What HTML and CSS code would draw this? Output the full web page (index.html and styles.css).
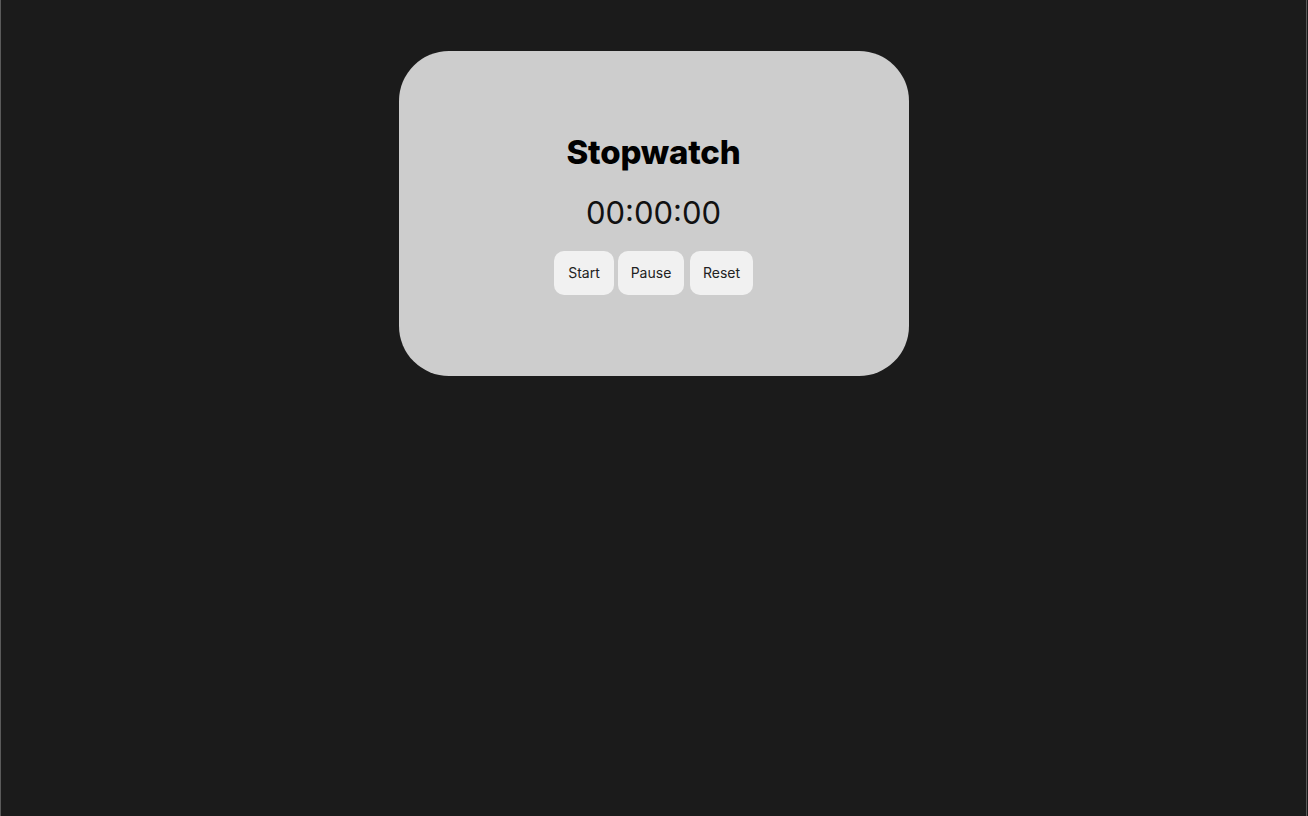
FILE: index.html
```html
<!DOCTYPE html>
<html lang="en">
<head>
<meta charset="utf-8">
<title>Stopwatch</title>
<link rel="stylesheet" href="styles.css">
</head>
<body>
<div class="page">
  <div class="card">
    <h1 class="title">Stopwatch</h1>
    <div class="time">00:00:00</div>
    <div class="controls">
      <button class="btn btn-start">Start</button>
      <button class="btn btn-pause">Pause</button>
      <button class="btn btn-reset">Reset</button>
    </div>
  </div>
</div>
</body>
</html>
```

FILE: styles.css
```css
html, body {
  margin: 0;
  padding: 0;
  height: 100%;
  background: #1b1b1b;
}
body {
  font-family: Inter, "Noto Sans", sans-serif;
}
.page {
  box-sizing: border-box;
  height: 100%;
  margin-right: 1px;
  border-left: 1px solid #5a5a5a;
  border-right: 1px solid #5a5a5a;
  display: flex;
  flex-direction: column;
  align-items: center;
  padding-top: 51px;
}
.card {
  box-sizing: border-box;
  width: 510px;
  height: 325px;
  background: #cdcdcd;
  border-radius: 50px;
  padding-top: 81px;
  display: flex;
  flex-direction: column;
  align-items: center;
}
.title {
  margin: 0;
  font-size: 33px;
  line-height: 40px;
  font-weight: 800;
  color: #000;
  letter-spacing: -0.2px;
}
.time {
  margin-top: 21px;
  font-size: 31px;
  line-height: 40px;
  font-weight: 400;
  color: #111;
}
.controls {
  margin-top: 18px;
  display: flex;
  gap: 4px;
}
.btn {
  font-family: Inter, "Noto Sans", sans-serif;
  font-size: 14px;
  line-height: 18px;
  height: 44px;
  padding: 0;
  text-align: center;
  border: none;
  border-radius: 10px;
  background: #f1f1f1;
  color: #222;
}
.btn-start {
  width: 60px;
}
.btn-pause {
  width: 66px;
  margin-right: 2px;
}
.btn-reset {
  width: 63px;
}
```
